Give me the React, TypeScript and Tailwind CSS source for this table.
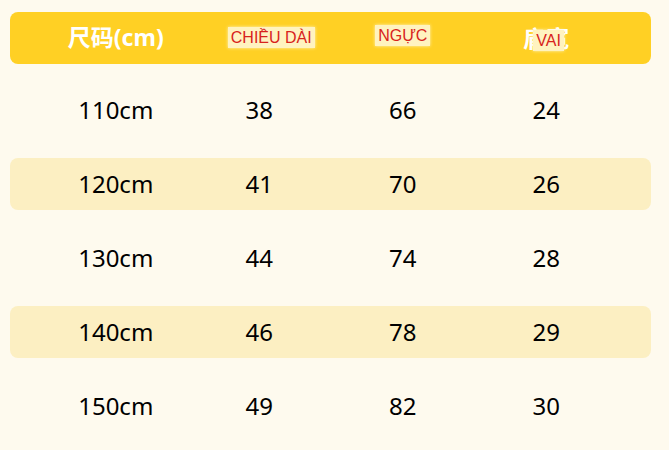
import React from 'react'

const rows = [
  ['110cm', '38', '66', '24'],
  ['120cm', '41', '70', '26'],
  ['130cm', '44', '74', '28'],
  ['140cm', '46', '78', '29'],
  ['150cm', '49', '82', '30'],
]

const cols = 'grid grid-cols-[143.5px_143.5px_143.5px_143.5px] pl-[34px] pr-[33px]'
const patch =
  'bg-[#fff3c0] px-[3px] text-[#d8231c] text-[16px] leading-[21px] font-normal shadow-[0_0_3px_#fff3c0] [font-family:"Liberation_Sans",sans-serif]'

export default function App() {
  return (
    <div
      className="w-[669px] h-[450px] bg-[#fefaee] pt-[12px] pl-[10px] pr-[18px]"
      style={{ fontFamily: '"Noto Sans", "Noto Sans CJK SC", sans-serif' }}
    >
      {/* header */}
      <div className={`${cols} h-[52px] items-center rounded-[8px] bg-[#ffd024]`}>
        <div className="text-center text-[23px] font-bold text-white leading-none -mt-[2px]">
          尺码(cm)
        </div>
        <div className="flex justify-center pl-[24px]">
          <span className={`${patch} -mt-[2px]`}>CHIỀU DÀI</span>
        </div>
        <div className="flex justify-center">
          <span className={`${patch} -mt-[6px]`}>NGỰC</span>
        </div>
        <div className="flex justify-center">
          <span className="relative text-[23px] font-bold text-white leading-none">
            肩宽
            <span className={`${patch} absolute left-[10px] top-[3px] px-[2px]`}>VAI</span>
          </span>
        </div>
      </div>

      {/* body */}
      <div className="mt-[20px] flex flex-col gap-[22px]">
        {rows.map((r, i) => (
          <div
            key={r[0]}
            className={`${cols} h-[52px] items-center rounded-[8px] ${i % 2 === 1 ? 'bg-[#fcefc2]' : ''}`}
          >
            {r.map((c, j) => (
              <div key={j} className="text-center text-[24px] text-black leading-none">
                {c}
              </div>
            ))}
          </div>
        ))}
      </div>
    </div>
  )
}
